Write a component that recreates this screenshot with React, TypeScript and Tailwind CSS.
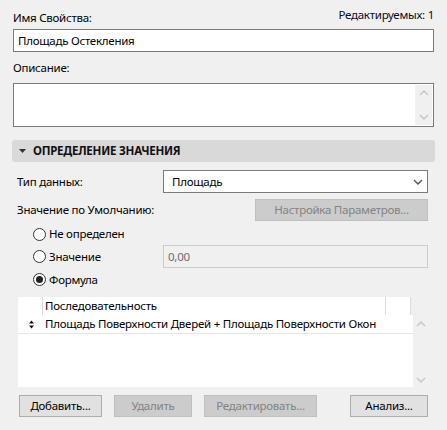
import React from "react";

const font = { fontFamily: '"Noto Sans", "Open Sans", Arial, sans-serif' };

function ChevronUp({ className = "" }: { className?: string }) {
  return (
    <svg width="10" height="6" viewBox="0 0 10 6" className={className}>
      <path d="M1 5 L5 1 L9 5" fill="none" stroke="currentColor" strokeWidth="1.4" />
    </svg>
  );
}

function ChevronDown({ className = "" }: { className?: string }) {
  return (
    <svg width="10" height="6" viewBox="0 0 10 6" className={className}>
      <path d="M1 1 L5 5 L9 1" fill="none" stroke="currentColor" strokeWidth="1.4" />
    </svg>
  );
}

function Radio({ checked, label }: { checked?: boolean; label: string }) {
  return (
    <div className="flex items-center h-full">
      <span className="w-[13px] h-[13px] rounded-full border border-[#333] bg-white flex items-center justify-center">
        {checked && <span className="w-[7px] h-[7px] rounded-full bg-[#222]" />}
      </span>
      <span className="ml-[3px]">{label}</span>
    </div>
  );
}

function Button({ label, disabled, w }: { label: string; disabled?: boolean; w: string }) {
  return (
    <div
      className={
        "h-[22px] flex items-center justify-center border " +
        w +
        (disabled
          ? " bg-[#cccccc] border-[#bfbfbf] text-[#838383]"
          : " bg-[#e1e1e1] border-[#adadad] text-black")
      }
    >
      {label}
    </div>
  );
}

export default function App() {
  return (
    <div
      className="w-[447px] h-[430px] bg-[#f0f0f0] text-[11.5px] tracking-[-0.25px] leading-[16px] text-black overflow-hidden"
      style={font}
    >
      <div className="px-[13px] pt-[7px]">
        {/* name */}
        <div className="flex justify-between items-start h-[19px]">
          <span className="mt-[3px]">Имя Свойства:</span>
          <span className="text-[#0a0a28]">Редактируемых: 1</span>
        </div>
        <div className="mt-[3px] h-[23px] border border-[#7a7a7a] bg-white flex items-center pl-[4px]">
          Площадь Остекления
        </div>

        {/* description */}
        <div className="mt-[8px] h-[16px]">Описание:</div>
        <div className="mt-[7px] h-[44px] border border-[#7a7a7a] bg-white flex justify-end p-[1px]">
          <div className="w-[17px] h-full bg-[#f0f0f0] flex flex-col items-center justify-between py-[5px] text-[#c4c4c4]">
            <ChevronUp />
            <ChevronDown />
          </div>
        </div>

        {/* section header */}
        <div className="mt-[13px] -mx-[1px] h-[22px] rounded-[3px] bg-[#d9d9d9] flex items-center pl-[7px]">
          <svg width="7" height="4" viewBox="0 0 7 4" className="text-[#333]">
            <path d="M0 0 H7 L3.5 4 Z" fill="currentColor" />
          </svg>
          <span className="ml-[7px] font-bold text-[#111]">ОПРЕДЕЛЕНИЕ ЗНАЧЕНИЯ</span>
        </div>

        {/* section content */}
        <div className="pl-[4px] pr-[6px]">
          <div className="mt-[8px] h-[23px] flex items-center">
            <span className="w-[146px]">Тип данных:</span>
            <div className="flex-1 h-full border border-[#7a7a7a] bg-white flex items-center justify-between pl-[8px] pr-[4px]">
              <span>Площадь</span>
              <ChevronDown className="text-[#555]" />
            </div>
          </div>
          <div className="mt-[6px] h-[22px] flex items-center justify-between">
            <span>Значение по Умолчанию:</span>
            <Button label="Настройка Параметров..." disabled w="w-[173px]" />
          </div>

          <div className="mt-[2px] h-[22px] pl-[16px]">
            <Radio label="Не определен" />
          </div>
          <div className="h-[23px] flex items-center pl-[16px]">
            <div className="w-[130px] h-full">
              <Radio label="Значение" />
            </div>
            <div className="flex-1 h-full border border-[#cccccc] bg-[#f0f0f0] text-[#6d6d6d] flex items-center pl-[4px]">
              0,00
            </div>
          </div>
          <div className="h-[23px] pl-[16px]">
            <Radio checked label="Формула" />
          </div>
        </div>

        {/* formula table */}
        <div className="mt-[6px] ml-[5px] mr-[6px] h-[90px] flex">
          <div className="flex-1 flex flex-col">
            <div className="h-[18px] flex mr-[2px] bg-white border-r border-[#dcdcdc]">
              <div className="w-[25px] border-r border-[#dcdcdc]" />
              <div className="flex-1 flex items-center pl-[2px] border-r border-[#dcdcdc]">Последовательность</div>
              <div className="w-[24px]" />
            </div>
            <div className="flex-1 bg-white flex flex-col">
              <div className="h-[19px] flex items-center border-b border-[#e6e6e6]">
                <div className="w-[26px] flex justify-end pr-[10px]">
                  <svg width="5" height="9" viewBox="0 0 5 9">
                    <path d="M0 3.5 L2.5 0.5 L5 3.5 Z M0 5.5 L2.5 8.5 L5 5.5 Z" fill="#111" />
                  </svg>
                </div>
                <span className="ml-[1px]">Площадь Поверхности Дверей + Площадь Поверхности Окон</span>
              </div>
            </div>
          </div>
          <div className="w-[15px] pt-[18px] flex flex-col">
            <div className="flex-1 flex flex-col items-center justify-between pt-[6px] pb-[4px] text-[#c4c4c4]">
              <ChevronUp />
              <ChevronDown />
            </div>
          </div>
        </div>

        {/* buttons */}
        <div className="mt-[8px] ml-[6px] mr-[6px] flex">
          <Button label="Добавить..." w="w-[83px]" />
          <div className="ml-[12px]">
            <Button label="Удалить" disabled w="w-[78px]" />
          </div>
          <div className="ml-[12px]">
            <Button label="Редактировать..." disabled w="w-[113px]" />
          </div>
          <div className="ml-auto">
            <Button label="Анализ..." w="w-[78px]" />
          </div>
        </div>
      </div>
    </div>
  );
}
